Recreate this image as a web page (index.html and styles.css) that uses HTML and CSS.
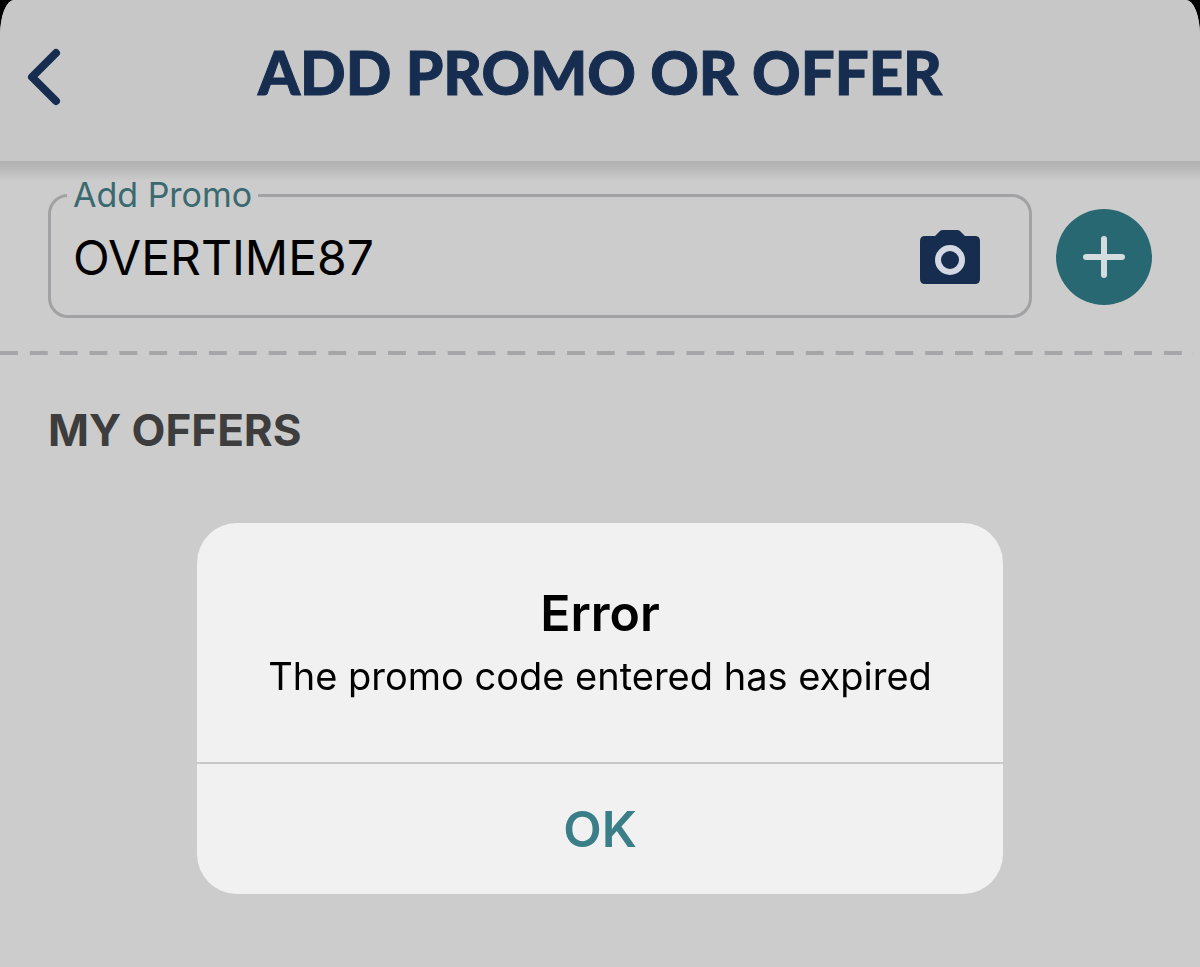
FILE: index.html
```html
<!DOCTYPE html>
<html lang="en">
<head>
  <meta charset="UTF-8" />
  <meta name="viewport" content="width=device-width, initial-scale=1.0"/>
  <title>Add Promo or Offer</title>
  <link rel="stylesheet" href="styles.css">
</head>
<body>

  <div class="screen">
    <header class="top-bar">
      <button type="button" class="back-btn" aria-label="Back">
        <svg width="40" height="60" viewBox="0 0 40 60">
          <path d="M32 6 L8 30 L32 54" fill="none" stroke="currentColor" stroke-width="8" stroke-linecap="round" stroke-linejoin="round"/>
        </svg>
      </button>
      <h1>ADD PROMO OR OFFER</h1>
    </header>

    <main>
      <!-- Promo code entry -->
      <form class="promo-form">
        <fieldset class="promo-field">
          <legend><label for="promo">Add Promo</label></legend>
          <div class="promo-row">
            <input type="text" id="promo" value="OVERTIME87" autocomplete="off" spellcheck="false" />
            <button type="button" class="camera-btn" aria-label="Scan code">
              <svg width="60" height="54" viewBox="0 0 60 54">
                <path d="M5 6 H15 L20 1 Q21 0 23 0 H37 Q39 0 40 1 L45 6 H55 Q60 6 60 11 V49 Q60 54 55 54 H5 Q0 54 0 49 V11 Q0 6 5 6 Z" fill="currentColor"/>
                <circle cx="30" cy="30" r="12" fill="none" stroke="#d3d8e2" stroke-width="6"/>
              </svg>
            </button>
          </div>
        </fieldset>
        <button type="button" class="add-btn" aria-label="Add promo">
          <svg width="44" height="44" viewBox="0 0 44 44">
            <path d="M22 4 V40 M4 22 H40" stroke="currentColor" stroke-width="6" stroke-linecap="round"/>
          </svg>
        </button>
      </form>

      <div class="divider"></div>

      <section class="offers">
        <h2>MY OFFERS</h2>
      </section>
    </main>
  </div>

  <!-- Error alert -->
  <div class="overlay">
    <div class="alert" role="alertdialog" aria-labelledby="alertTitle" aria-describedby="alertText">
      <div class="alert-body">
        <h3 id="alertTitle">Error</h3>
        <p id="alertText">The promo code entered has expired</p>
      </div>
      <button type="button" class="alert-ok">OK</button>
    </div>
  </div>

</body>
</html>
```

FILE: styles.css
```css
:root {
  --bar: #c7c7c7;
  --bg: #cccccc;
  --navy: #162d50;
  --teal: #286873;
  --line: #a2a2a4;
  --alert: #f1f1f1;
}

* {
  margin: 0;
  padding: 0;
  box-sizing: border-box;
  font-family: Inter, 'Liberation Sans', sans-serif;
}

body {
  background: #000;
}

button {
  border: none;
  background: none;
  cursor: pointer;
}

svg {
  display: block;
}

.screen {
  min-height: 100vh;
  background: var(--bg);
  border-radius: 14px 14px 0 0 / 36px 36px 0 0;
  overflow: hidden;
}

.top-bar {
  display: grid;
  grid-template-columns: 48px 1fr 48px;
  align-items: start;
  padding: 42px 24px 49px;
  background: var(--bar);
}

.back-btn {
  display: flex;
  align-items: center;
  height: 70px;
  color: var(--navy);
}

h1 {
  font-family: Lato, sans-serif;
  font-size: 60px;
  font-weight: 900;
  line-height: 60px;
  text-align: center;
  color: var(--navy);
  -webkit-text-stroke: 1px var(--navy);
  stroke-linejoin: round;
}

/* shadow under the top bar */
main {
  background: linear-gradient(#b1b1b1, #b9b9b9 8px, var(--bg) 20px);
}

.promo-form {
  display: flex;
  align-items: flex-start;
  gap: 24px;
  padding: 12px 48px 33px;
}

.promo-field {
  flex: 1;
  min-width: 0;
  border: 3px solid var(--line);
  border-radius: 20px;
  padding: 0 49px 18px 16px;
}

.promo-field legend {
  padding: 0 6px;
  font-size: 34px;
  line-height: 44px;
  color: #3a6a70;
}

.promo-row {
  display: flex;
  align-items: center;
  padding-left: 6px;
}

.promo-row input {
  flex: 1;
  min-width: 0;
  height: 80px;
  border: none;
  outline: none;
  background: transparent;
  font-size: 48px;
  color: #000;
}

.camera-btn {
  color: var(--navy);
}

.add-btn {
  display: flex;
  align-items: center;
  justify-content: center;
  width: 96px;
  height: 96px;
  margin-top: 36px;
  border-radius: 50%;
  background: var(--teal);
  color: #d3dcde;
}

.divider {
  height: 4px;
  margin-right: 6px;
  background-image: linear-gradient(90deg, #a6a6a9 60%, transparent 60%);
  background-size: 30px 4px;
  background-repeat: round;
}

.offers {
  padding: 50px 48px;
}

.offers h2 {
  font-size: 44px;
  line-height: 50px;
  font-weight: 700;
  color: #3d3d3d;
}

.overlay {
  position: fixed;
  inset: 0;
  display: flex;
  align-items: flex-end;
  justify-content: center;
  padding: 0 20px 73px;
}

.alert {
  width: 100%;
  max-width: 806px;
  border-radius: 40px;
  background: var(--alert);
  text-align: center;
  overflow: hidden;
}

.alert-body {
  padding: 60px 24px 61px;
}

.alert-body h3 {
  font-size: 50px;
  line-height: 60px;
  font-weight: 600;
  color: #000;
}

.alert-body p {
  padding-top: 8px;
  font-size: 38px;
  line-height: 50px;
  color: #000;
}

.alert-ok {
  width: 100%;
  height: 132px;
  border-top: 2px solid #c8c8c8;
  font-size: 50px;
  font-weight: 600;
  color: #3a7f88;
}
```
